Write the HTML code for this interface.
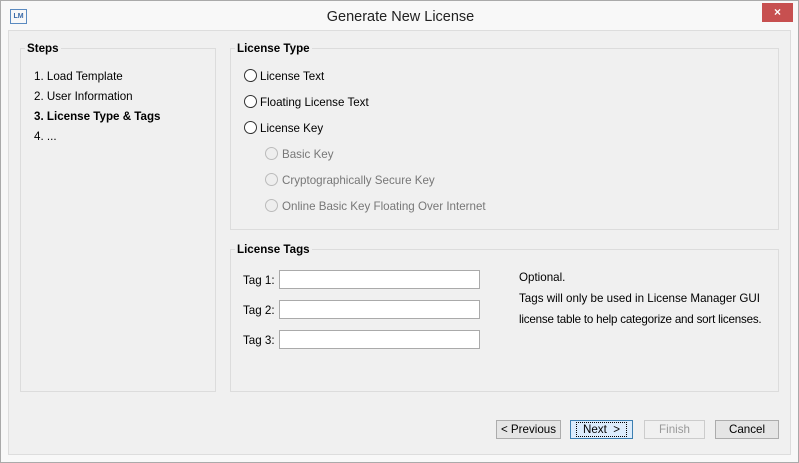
<!DOCTYPE html>
<html><head><style>
*{margin:0;padding:0;box-sizing:border-box}
body{width:799px;height:463px;position:relative;overflow:hidden;background:#fff;font-family:"Liberation Sans",sans-serif;font-size:11.6px;color:#000}
.win{position:absolute;left:0;top:0;width:799px;height:463px;border:1px solid #aaa;background:#f8f8f8}
.client{position:absolute;left:8px;top:30px;width:783px;height:425px;background:#f0f0f0;border:1px solid #ddd}
.a{position:absolute;white-space:nowrap;margin-top:1px}
.box{position:absolute;border:1px solid #dcdcdc}
.lg{position:absolute;background:#f0f0f0;font-weight:bold;padding:0 2px 0 2px;top:-7px;left:4px;line-height:14px}
.r{position:absolute;width:13px;height:13px;border-radius:50%;border:1px solid #333;background:#fff;margin-top:-1px}
.r.d{border-color:#bbb;background:#eee}
.in{position:absolute;left:279px;width:201px;height:19px;background:#fff;border:1px solid #aaa}
.b{position:absolute;top:420px;height:19px;border:1px solid #acacac;background:#e5e5e5;text-align:center;line-height:17px}
</style></head><body>
<div class="win">
<div class="a" style="left:9px;top:7px;width:17px;height:15px;border:1px solid #5a8ac0;font-size:7px;color:#3a6aa8;text-align:center;line-height:13px;font-weight:bold">LM</div>
<div class="a" style="left:0;width:799px;top:7px;text-align:center;font-size:14.5px;color:#222">Generate New License</div>
<div class="a" style="left:761px;top:1px;width:31px;height:19px;background:#c75050;color:#fff;text-align:center;line-height:18px;font-size:12px;font-weight:bold">×</div>
</div>
<div class="client"></div>
<div class="box" style="left:20px;top:48px;width:196px;height:344px"><div class="lg">Steps</div></div>
<div class="a" style="left:34px;top:69px">1. Load Template</div>
<div class="a" style="left:34px;top:89px">2. User Information</div>
<div class="a" style="left:34px;top:109px;font-weight:bold">3. License Type &amp; Tags</div>
<div class="a" style="left:34px;top:129px">4. ...</div>

<div class="box" style="left:230px;top:48px;width:549px;height:182px"><div class="lg">License Type</div></div>
<div class="r" style="left:244px;top:70px"></div><div class="a" style="left:260px;top:69px">License Text</div>
<div class="r" style="left:244px;top:96px"></div><div class="a" style="left:260px;top:95px">Floating License Text</div>
<div class="r" style="left:244px;top:122px"></div><div class="a" style="left:260px;top:121px">License Key</div>
<div class="r d" style="left:265px;top:148px"></div><div class="a" style="left:282px;top:147px;color:#777">Basic Key</div>
<div class="r d" style="left:265px;top:174px"></div><div class="a" style="left:282px;top:173px;color:#777">Cryptographically Secure Key</div>
<div class="r d" style="left:265px;top:200px"></div><div class="a" style="left:282px;top:199px;color:#777">Online Basic Key Floating Over Internet</div>

<div class="box" style="left:230px;top:249px;width:549px;height:143px"><div class="lg">License Tags</div></div>
<div class="a" style="left:243px;top:273px">Tag 1:</div><div class="in" style="top:270px"></div>
<div class="a" style="left:243px;top:303px">Tag 2:</div><div class="in" style="top:300px"></div>
<div class="a" style="left:243px;top:333px">Tag 3:</div><div class="in" style="top:330px"></div>
<div class="a" style="left:519px;top:270px">Optional.</div>
<div class="a" style="left:519px;top:291px">Tags will only be used in License Manager GUI</div>
<div class="a" style="left:519px;top:312px;letter-spacing:-0.2px">license table to help categorize and sort licenses.</div>

<div class="b" style="left:496px;width:65px">&lt; Previous</div>
<div class="b" style="left:570px;width:63px;border-color:#3c7fb1;background:#dcecfc"><span style="outline:1px dotted #000;padding:0 6px">Next &nbsp;&gt;</span></div>
<div class="b" style="left:644px;width:61px;color:#999;border-color:#ccc;background:#f0f0f0">Finish</div>
<div class="b" style="left:715px;width:64px">Cancel</div>
</body></html>
